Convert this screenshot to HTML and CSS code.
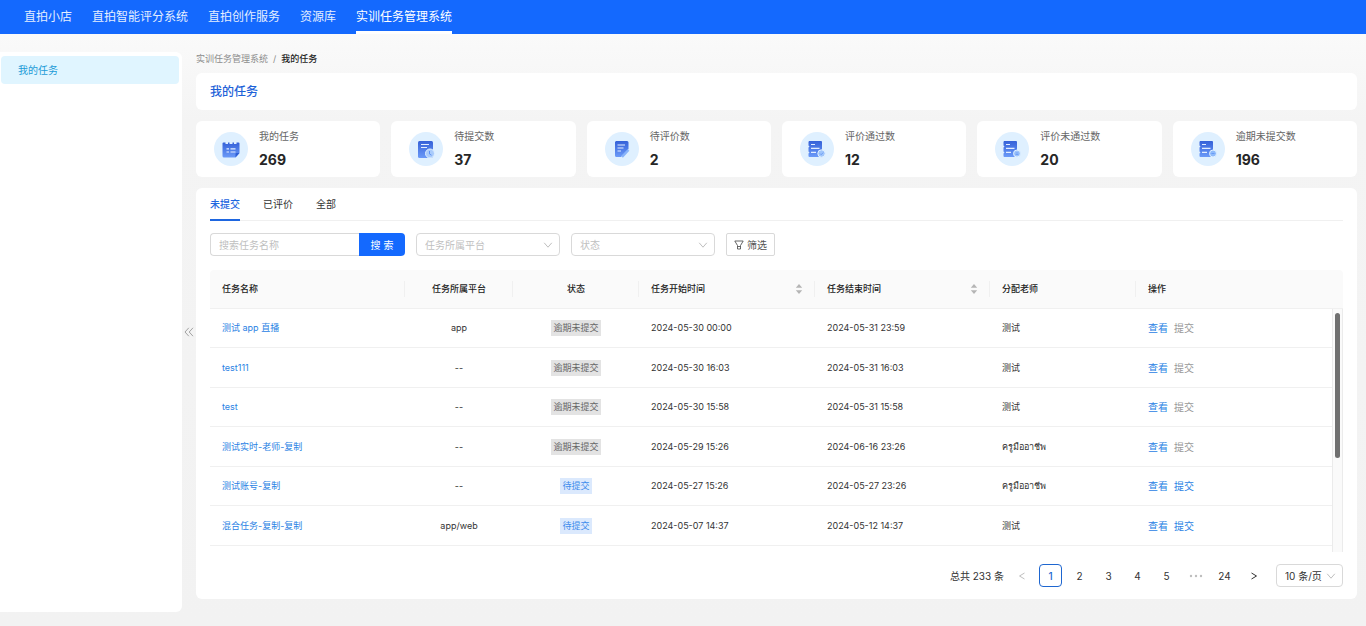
FILE: index.html
```
<!DOCTYPE html>
<html lang="zh-CN">
<head>
<meta charset="utf-8">
<title>我的任务</title>
<link rel="stylesheet" href="styles.css">
</head>
<body>
<svg class="defs" aria-hidden="true">
  <defs>
    <linearGradient id="ink" x1="0" y1="0" x2="0" y2="1">
      <stop offset="0" stop-color="#3561d8"/><stop offset="1" stop-color="#6b9af8"/>
    </linearGradient>
    <symbol id="chevron" viewBox="0 0 10 10"><path d="M1.2 2.8 5 7.2 8.8 2.8" fill="none" stroke="currentColor"/></symbol>
    <symbol id="sorter" viewBox="0 0 8 12"><path d="M4 1 7.2 4.8H.8zM4 11 .8 7.2h6.4z" fill="currentColor"/></symbol>
    <symbol id="sheet" viewBox="0 0 34 34">
      <path d="M9 9h12a1 1 0 0 1 1 1V25H9.500a1 1 0 0 1-1-1V21.500l1-1-1-1V15.500l1-1-1-1V10z" fill="url(#ink)"/>
      <path d="M11 12.500h4M11 16.300h8.500M11 20.300h5" stroke="#e3eeff" stroke-width="1.200"/>
    </symbol>
  </defs>
</svg>

<header class="topbar">
  <nav class="topnav">
    <a href="#">直拍小店</a>
    <a href="#">直拍智能评分系统</a>
    <a href="#">直拍创作服务</a>
    <a href="#">资源库</a>
    <a href="#" class="current" aria-current="page">实训任务管理系统</a>
  </nav>
</header>

<div class="layout">
  <aside class="sidebar"><a href="#" class="side-link">我的任务</a></aside>
  <button class="collapse" aria-label="收起侧栏">
    <svg width="10" height="10" viewBox="0 0 10 10"><path d="M4.800.8 1 5l3.800 4.200M9 .8 5.200 5 9 9.200" fill="none" stroke="currentColor" stroke-width=".9"/></svg>
  </button>

  <main class="main">
    <div class="crumbs"><a href="#">实训任务管理系统</a><span>/</span><b>我的任务</b></div>
    <div class="stack">
      <h1 class="title">我的任务</h1>

      <section class="stats">
        <div class="stat">
          <svg class="badge" viewBox="0 0 34 34"><circle cx="17" cy="17" r="17" fill="#dff0ff"/>
            <path d="M9.500 10.500h2v1.500h2.500v-1.500h1.500v1.500h3v-1.500H20v1.500h2.500v-1.500h2a1 1 0 0 1 1 1V21l-4 4.500H10a1.500 1.500 0 0 1-1.500-1.500V11.500a1 1 0 0 1 1-1z" fill="url(#ink)"/>
            <path d="M21.500 25.500V22a1 1 0 0 1 1-1h3z" fill="#2f5fd6"/>
            <path d="M12.500 16.800h2.500M16.500 16.800h5M12.500 20h2.500M16.500 20h5" stroke="#e3eeff" stroke-width="1.200"/></svg>
          <div class="stat-text"><span class="label">我的任务</span><span class="num">269</span></div>
        </div>
        <div class="stat">
          <svg class="badge" viewBox="0 0 34 34"><circle cx="17" cy="17" r="17" fill="#dff0ff"/>
            <rect x="9" y="9" width="15" height="17" rx="1.500" fill="url(#ink)"/>
            <path d="M12 12.500h8M12 15.500h6" stroke="#e3eeff" stroke-width="1.200"/>
            <circle cx="21" cy="21.500" r="4.500" fill="#a9cbfb" stroke="#dff0ff"/>
            <path d="M20.500 19v3l2 1.200" fill="none" stroke="#5f93f5"/></svg>
          <div class="stat-text"><span class="label">待提交数</span><span class="num">37</span></div>
        </div>
        <div class="stat">
          <svg class="badge" viewBox="0 0 34 34"><circle cx="17" cy="17" r="17" fill="#dff0ff"/>
            <path d="M11 9h11a1.500 1.500 0 0 1 1.500 1.500V17l-7.500 8h-4.500a1.500 1.500 0 0 1-1.500-1.500V10z" fill="url(#ink)"/>
            <path d="M12.500 13h7.500M12.500 16h6M12.500 19h3.500" stroke="#e3eeff" stroke-width="1.200"/>
            <path d="M17 24.800 23.500 18" stroke="#87b3fa" stroke-width="2.400"/></svg>
          <div class="stat-text"><span class="label">待评价数</span><span class="num">2</span></div>
        </div>
        <div class="stat">
          <svg class="badge" viewBox="0 0 34 34"><circle cx="17" cy="17" r="17" fill="#dff0ff"/><use href="#sheet"/>
            <circle cx="21.500" cy="21.500" r="3.700" fill="#9fc5fb" stroke="#dff0ff"/><path d="m20 21.500 1.200 1.200 2-2.200" fill="none" stroke="#5f93f5" stroke-width=".8"/></svg>
          <div class="stat-text"><span class="label">评价通过数</span><span class="num">12</span></div>
        </div>
        <div class="stat">
          <svg class="badge" viewBox="0 0 34 34"><circle cx="17" cy="17" r="17" fill="#dff0ff"/><use href="#sheet"/>
            <circle cx="22" cy="21.500" r="3.500" fill="#9fc5fb" stroke="#dff0ff"/><path d="M20.500 21h3M20.500 22.500h3" stroke="#5f93f5" stroke-width=".7"/></svg>
          <div class="stat-text"><span class="label">评价未通过数</span><span class="num">20</span></div>
        </div>
        <div class="stat">
          <svg class="badge" viewBox="0 0 34 34"><circle cx="17" cy="17" r="17" fill="#dff0ff"/><use href="#sheet"/>
            <circle cx="22" cy="21.500" r="3.500" fill="#8ebafb" stroke="#dff0ff"/><path d="M20.500 21.500h3" stroke="#5f93f5" stroke-width=".8"/></svg>
          <div class="stat-text"><span class="label">逾期未提交数</span><span class="num">196</span></div>
        </div>
      </section>

      <section class="panel">
        <div class="tabs" role="tablist">
          <button role="tab" class="tab active" aria-selected="true">未提交</button>
          <button role="tab" class="tab" aria-selected="false">已评价</button>
          <button role="tab" class="tab" aria-selected="false">全部</button>
        </div>

        <form class="filters">
          <div class="search">
            <input type="text" placeholder="搜索任务名称" aria-label="搜索任务名称">
            <button type="button">搜 索</button>
          </div>
          <div class="picker">
            <select aria-label="任务所属平台"><option>任务所属平台</option></select>
            <svg width="10" height="10"><use href="#chevron"/></svg>
          </div>
          <div class="picker">
            <select aria-label="状态"><option>状态</option></select>
            <svg width="10" height="10"><use href="#chevron"/></svg>
          </div>
          <button type="button" class="filter-btn">
            <svg width="10" height="10" viewBox="0 0 10 10"><path d="M.8 1h8.400L6.500 5.500V9h-3V5.500zM3.500 6.500h3" fill="none" stroke="currentColor" stroke-width=".9"/></svg>筛选
          </button>
        </form>

        <div class="grid-head">
          <table>
            <colgroup><col class="c-name"><col class="c-plat"><col class="c-state"><col class="c-start"><col class="c-end"><col class="c-teacher"><col class="c-act"></colgroup>
            <thead><tr>
              <th>任务名称</th><th class="mid">任务所属平台</th><th class="mid">状态</th>
              <th><span class="sort">任务开始时间<svg width="8" height="12"><use href="#sorter"/></svg></span></th>
              <th><span class="sort">任务结束时间<svg width="8" height="12"><use href="#sorter"/></svg></span></th>
              <th>分配老师</th><th>操作</th>
            </tr></thead>
          </table>
        </div>
        <div class="grid-body">
          <table>
            <colgroup><col class="c-name"><col class="c-plat"><col class="c-state"><col class="c-start"><col class="c-end"><col class="c-teacher"><col class="c-act"></colgroup>
            <tbody>
              <tr><td><a href="#">测试 app 直播</a></td><td class="mid">app</td><td class="mid"><span class="tag">逾期未提交</span></td><td>2024-05-30 00:00</td><td>2024-05-31 23:59</td><td>测试</td><td><span class="acts"><a href="#">查看</a><span class="off">提交</span></span></td></tr>
              <tr><td><a href="#">test111</a></td><td class="mid">--</td><td class="mid"><span class="tag">逾期未提交</span></td><td>2024-05-30 16:03</td><td>2024-05-31 16:03</td><td>测试</td><td><span class="acts"><a href="#">查看</a><span class="off">提交</span></span></td></tr>
              <tr><td><a href="#">test</a></td><td class="mid">--</td><td class="mid"><span class="tag">逾期未提交</span></td><td>2024-05-30 15:58</td><td>2024-05-31 15:58</td><td>测试</td><td><span class="acts"><a href="#">查看</a><span class="off">提交</span></span></td></tr>
              <tr><td><a href="#">测试实时-老师-复制</a></td><td class="mid">--</td><td class="mid"><span class="tag">逾期未提交</span></td><td>2024-05-29 15:26</td><td>2024-06-16 23:26</td><td>ครูมืออาชีพ</td><td><span class="acts"><a href="#">查看</a><span class="off">提交</span></span></td></tr>
              <tr><td><a href="#">测试账号-复制</a></td><td class="mid">--</td><td class="mid"><span class="tag open">待提交</span></td><td>2024-05-27 15:26</td><td>2024-05-27 23:26</td><td>ครูมืออาชีพ</td><td><span class="acts"><a href="#">查看</a><a href="#">提交</a></span></td></tr>
              <tr><td><a href="#">混合任务-复制-复制</a></td><td class="mid">app/web</td><td class="mid"><span class="tag open">待提交</span></td><td>2024-05-07 14:37</td><td>2024-05-12 14:37</td><td>测试</td><td><span class="acts"><a href="#">查看</a><a href="#">提交</a></span></td></tr>
            </tbody>
          </table>
          <div class="track"><div class="thumb"></div></div>
        </div>

        <nav class="pager" aria-label="分页">
          <span class="total">总共 233 条</span>
          <button class="page dim" aria-label="上一页"><svg width="8" height="10" viewBox="0 0 8 10"><path d="M6.500 2 1.500 5l5 3" fill="none" stroke="currentColor"/></svg></button>
          <button class="page now">1</button>
          <button class="page">2</button>
          <button class="page">3</button>
          <button class="page">4</button>
          <button class="page">5</button>
          <button class="page dim" aria-label="向后 5 页"><svg width="14" height="4" viewBox="0 0 14 4"><path d="M2 .8a1.200 1.200 0 1 1 0 2.400 1.200 1.200 0 0 1 0-2.400zM7 .8a1.200 1.200 0 1 1 0 2.400 1.200 1.200 0 0 1 0-2.400zM12 .8a1.200 1.200 0 1 1 0 2.400 1.200 1.200 0 0 1 0-2.400z" fill="currentColor"/></svg></button>
          <button class="page">24</button>
          <button class="page" aria-label="下一页"><svg width="8" height="10" viewBox="0 0 8 10"><path d="m1.500 2 5 3-5 3" fill="none" stroke="currentColor"/></svg></button>
          <div class="picker size">
            <select aria-label="每页条数"><option>10 条/页</option></select>
            <svg width="10" height="10"><use href="#chevron"/></svg>
          </div>
        </nav>
      </section>
    </div>
  </main>
</div>
</body>
</html>
```
FILE: styles.css
```
* { box-sizing: border-box; }

body {
  margin: 0;
  min-height: 100vh;
  display: flex;
  flex-direction: column;
  background: linear-gradient(#fafafa 34px, #f4f4f4 120px, #f2f2f2);
  color: #333;
  font: 10px/14px Inter, "Noto Sans CJK SC", "Noto Sans", sans-serif;
}

a { color: #2a82e4; text-decoration: none; }
button, input, select { font: inherit; color: inherit; margin: 0; padding: 0; border: 0; background: none; }
button { cursor: pointer; }
svg { display: block; flex: none; }
.defs { position: absolute; width: 0; height: 0; }

/* top navigation */
.topbar { background: #1469fe; padding: 0 24px; }
.topnav { display: flex; gap: 20px; }
.topnav a {
  color: #e4eeff;
  font-size: 12px;
  line-height: 29px;
  padding-top: 2px;
  border-bottom: 3px solid transparent;
}
.topnav .current { color: #fff; border-color: #fff; }

.layout { flex: 1; display: flex; padding: 18px 9px 14px 0; }

/* sidebar */
.sidebar { width: 182px; background: #fff; border-radius: 0 6px 6px 0; padding: 4px 3px 4px 1px; }
.side-link {
  display: block;
  padding: 0 17px;
  line-height: 28px;
  border-radius: 4px;
  background: #e0f5ff;
  color: #1c9bd7;
}
.collapse { width: 14px; display: grid; place-items: center; color: #999; }

/* content */
.main { flex: 1; min-width: 0; }
.crumbs { display: flex; gap: 5px; font-size: 9px; margin-bottom: 7px; }
.crumbs a, .crumbs span { color: #8c8c8c; }
.crumbs b { font-weight: 500; color: #222; }
.stack { display: flex; flex-direction: column; gap: 11px; }
.title {
  margin: 0;
  padding: 11px 14px;
  background: #fff;
  border-radius: 6px;
  color: #1e62d8;
  font-size: 12px;
  line-height: 15px;
  font-weight: 500;
}

.stats { display: grid; grid-template-columns: repeat(6, 1fr); gap: 11px; }
.stat {
  display: flex;
  align-items: center;
  gap: 11px;
  padding: 8px 18px;
  background: #fff;
  border-radius: 6px;
}
.badge { width: 34px; height: 34px; }
.stat-text { display: flex; flex-direction: column; gap: 8px; white-space: nowrap; }
.label { color: #666; }
.num { font-size: 14px; line-height: 18px; font-weight: 700; color: #262626; }

.panel { background: #fff; border-radius: 6px; padding: 0 14px 12px; }
.tabs { display: flex; gap: 23px; border-bottom: 1px solid #f0f0f0; margin-bottom: 12px; }
.tab { line-height: 29px; padding-top: 2px; border-bottom: 2px solid transparent; margin-bottom: -1px; color: #333; }
.tab.active { color: #1e66e0; font-weight: 500; border-color: #1e66e0; }

/* filters */
.filters { display: flex; gap: 11px; margin-bottom: 14px; }
.search { display: flex; width: 195px; height: 23px; }
.search input {
  flex: 1;
  min-width: 0;
  padding: 0 8px;
  border: 1px solid #d9d9d9;
  border-right: 0;
  border-radius: 4px 0 0 4px;
}
.search input::placeholder { color: #bfbfbf; opacity: 1; }
.search button { width: 46px; border-radius: 0 4px 4px 0; background: #1469fe; color: #fff; }
.picker { display: grid; width: 144px; height: 23px; align-items: center; }
.picker select, .picker svg { grid-area: 1 / 1; }
.picker select {
  appearance: none;
  width: 100%;
  height: 23px;
  padding: 0 8px;
  border: 1px solid #d9d9d9;
  border-radius: 4px;
  color: #bfbfbf;
}
.picker svg { justify-self: end; margin-right: 7px; color: #bfbfbf; pointer-events: none; }
.filter-btn {
  display: flex;
  align-items: center;
  gap: 3px;
  padding: 0 7px;
  border: 1px solid #d9d9d9;
  border-radius: 2px;
  color: #555;
}

/* task table */
table { width: 100%; table-layout: fixed; border-collapse: separate; border-spacing: 0; font-size: 9px; }
.c-name { width: 195px; }
.c-plat { width: 108px; }
.c-state { width: 126px; }
.c-start { width: 176px; }
.c-end { width: 175px; }
.c-teacher { width: 146px; }
.c-act { width: 196px; }
th, td { padding: 0 12px; text-align: left; border-bottom: 1px solid #f0f0f0; }
.mid { text-align: center; }
.grid-head { padding-right: 11px; background: #fafafa; border-radius: 4px 4px 0 0; border-bottom: 1px solid #f0f0f0; }
th {
  height: 38px;
  border: 0;
  font-weight: 500;
  color: #222;
  background: linear-gradient(#f0f0f0, #f0f0f0) right center / 1px 16px no-repeat;
}
th:last-child { background: none; }
.sort { display: flex; align-items: center; justify-content: space-between; }
.sort svg { color: #b5b5b5; }
.grid-body { display: flex; align-items: flex-start; margin-bottom: 12px; }
.grid-body table { flex: 1; min-width: 0; }
tbody tr:nth-child(odd) { height: 39px; }
tbody tr:nth-child(even) { height: 40px; }
.tag { display: inline-block; padding: 1px 2px; background: #e3e3e3; color: #666; }
.tag.open { background: #dbe9fd; color: #3d8cec; }
.acts { display: flex; gap: 6px; font-size: 10px; }
.off { color: #999; }
.track {
  width: 11px;
  height: 243px;
  padding: 4px 2px;
  border: solid #ebebeb;
  border-width: 0 1px;
  background: #fafafa;
}
.thumb { width: 5px; height: 145px; border-radius: 3px; background: #707070; }

/* pagination */
.pager { display: flex; justify-content: flex-end; align-items: center; gap: 6px; }
.page { width: 23px; height: 23px; display: grid; place-items: center; border-radius: 4px; }
.page.now { border: 1px solid #1e66d0; color: #1e66d0; font-weight: 500; }
.page.dim { color: #bfbfbf; }
.picker.size { width: 67px; margin-left: 5px; }
.picker.size select { color: #333; }
```
